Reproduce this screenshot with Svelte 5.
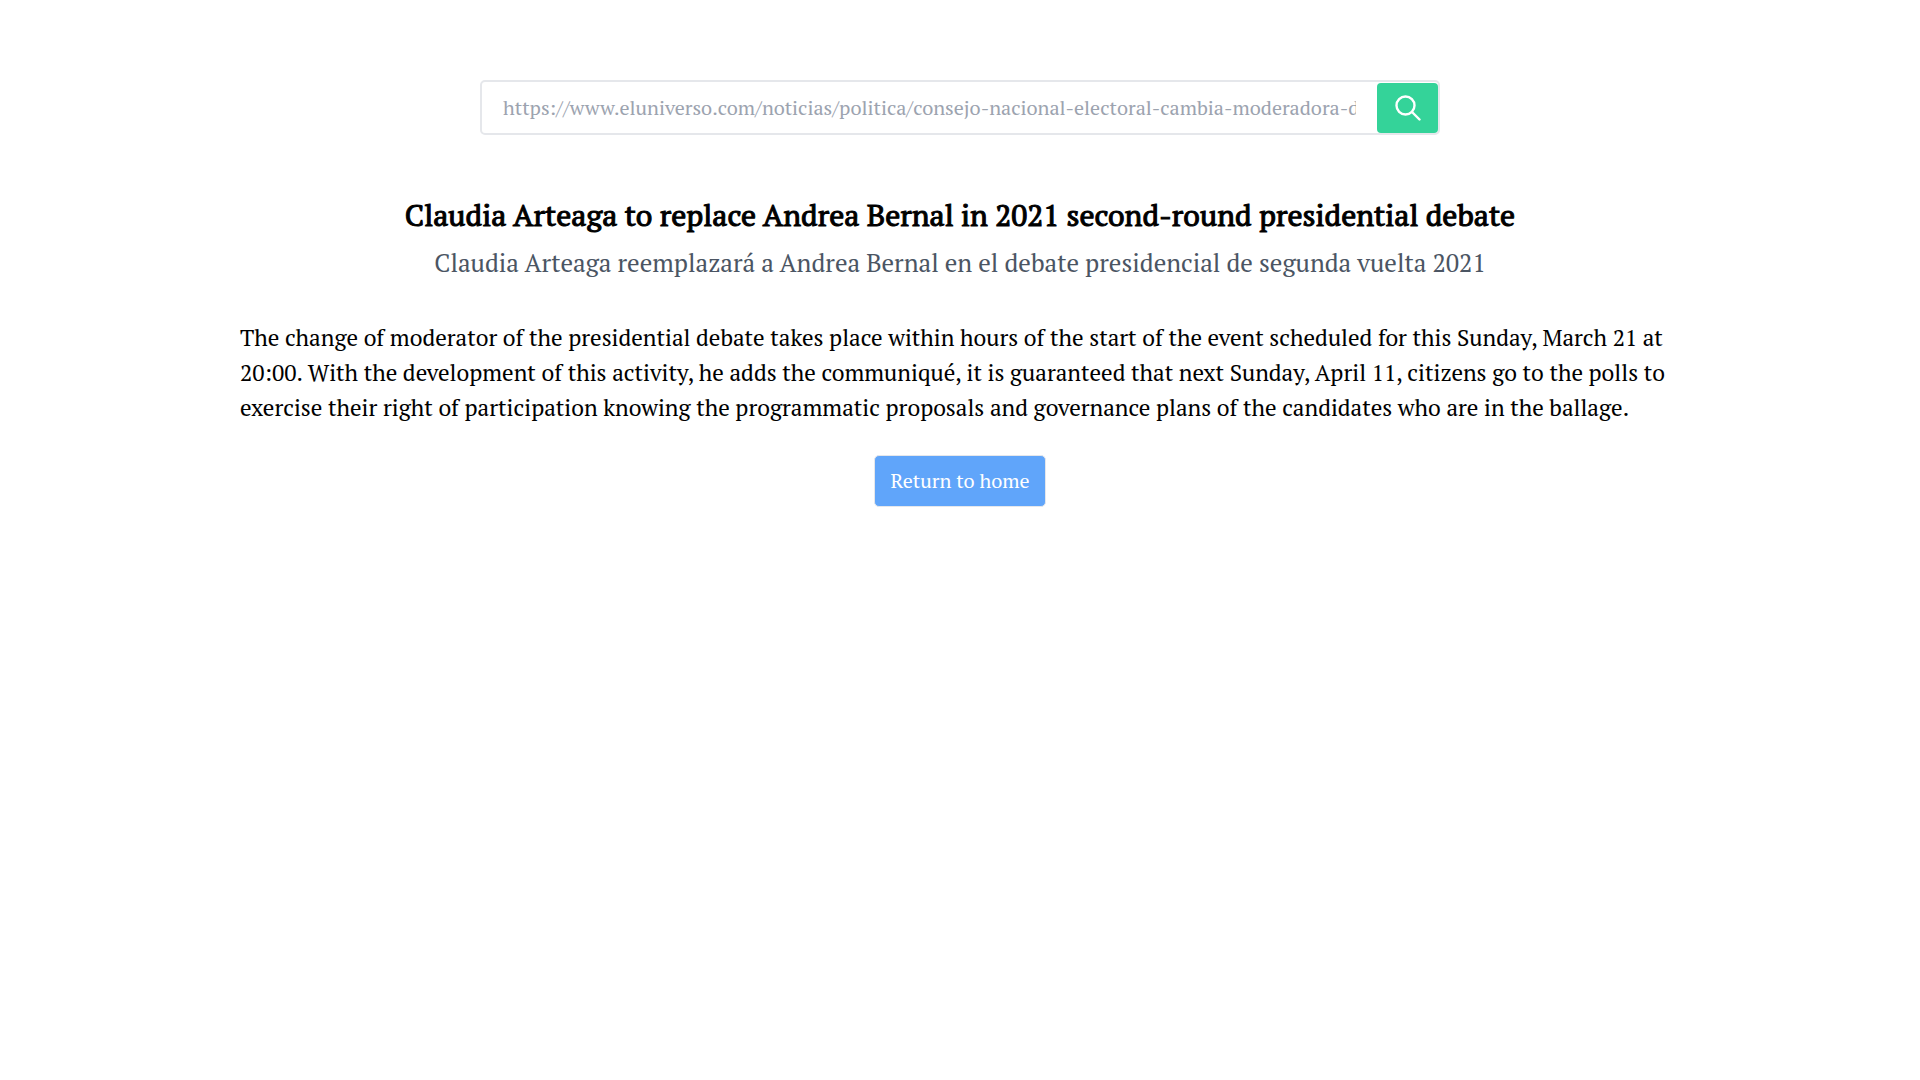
<script>
  const articleUrl =
    'https://www.eluniverso.com/noticias/politica/consejo-nacional-electoral-cambia-moderadora-debate-presidencial';
  let query = $state('');
</script>

<main>
  <form class="search" onsubmit={(event) => event.preventDefault()}>
    <input type="text" aria-label="Article URL" placeholder={articleUrl} bind:value={query} />
    <button type="submit" aria-label="Search">
      <svg viewBox="0 0 26 26" aria-hidden="true">
        <circle cx="10.5" cy="10.5" r="9" />
        <path d="M17 17l7.5 7.5" />
      </svg>
    </button>
  </form>

  <article>
    <h1>Claudia Arteaga to replace Andrea Bernal in 2021 second-round presidential debate</h1>
    <h2>Claudia Arteaga reemplazará a Andrea Bernal en el debate presidencial de segunda vuelta 2021</h2>
    <p>
      The change of moderator of the presidential debate takes place within hours of the start of
      the event scheduled for this Sunday, March 21 at 20:00. With the development of this activity,
      he adds the communiqué, it is guaranteed that next Sunday, April 11, citizens go to the polls
      to exercise their right of participation knowing the programmatic proposals and governance
      plans of the candidates who are in the ballage.
    </p>
  </article>

  <a class="home" href="/">Return to home</a>
</main>

<style>
  :global(body) {
    margin: 0;
    background: #fff;
  }

  main {
    display: flex;
    flex-direction: column;
    align-items: center;
    padding: 80px 12.5%;
    color: #000;
    font-family: 'PT Serif', 'Liberation Serif', serif;
  }

  .search {
    display: flex;
    box-sizing: border-box;
    width: 66.6667%;
    height: 55px;
    border: 2px solid #e5e7eb;
    border-radius: 5px;
  }

  .search input {
    flex: 1;
    min-width: 0;
    padding: 0 21px;
    border: 0;
    outline: 0;
    background: transparent;
    color: #000;
    font: inherit;
    font-size: 20px;
  }

  .search input::placeholder {
    color: #9ca3af;
    opacity: 1;
  }

  .search button {
    display: flex;
    align-items: center;
    justify-content: center;
    width: 61px;
    margin-top: 1px;
    padding: 0;
    border: 0;
    border-radius: 4px;
    background: #34d399;
    cursor: pointer;
  }

  .search svg {
    width: 26px;
    height: 26px;
    fill: none;
    stroke: #fff;
    stroke-width: 2.4;
    stroke-linecap: round;
  }

  article {
    width: 100%;
    padding-top: 60px;
  }

  h1,
  h2 {
    margin: 0;
    font-weight: 400;
    text-align: center;
  }

  h1 {
    font-size: 30px;
    line-height: 40px;
    -webkit-text-stroke: 1px currentColor;
  }

  h2 {
    margin-top: 10px;
    color: #4b5563;
    font-size: 25px;
    line-height: 36px;
  }

  p {
    margin: 39px 0 30px;
    font-size: 23px;
    line-height: 35px;
  }

  .home {
    padding: 10px 15px;
    border: 1px solid #e5e7eb;
    border-radius: 5px;
    background: #60a5fa;
    color: #fff;
    font-size: 20px;
    line-height: 30px;
    text-decoration: none;
  }
</style>
